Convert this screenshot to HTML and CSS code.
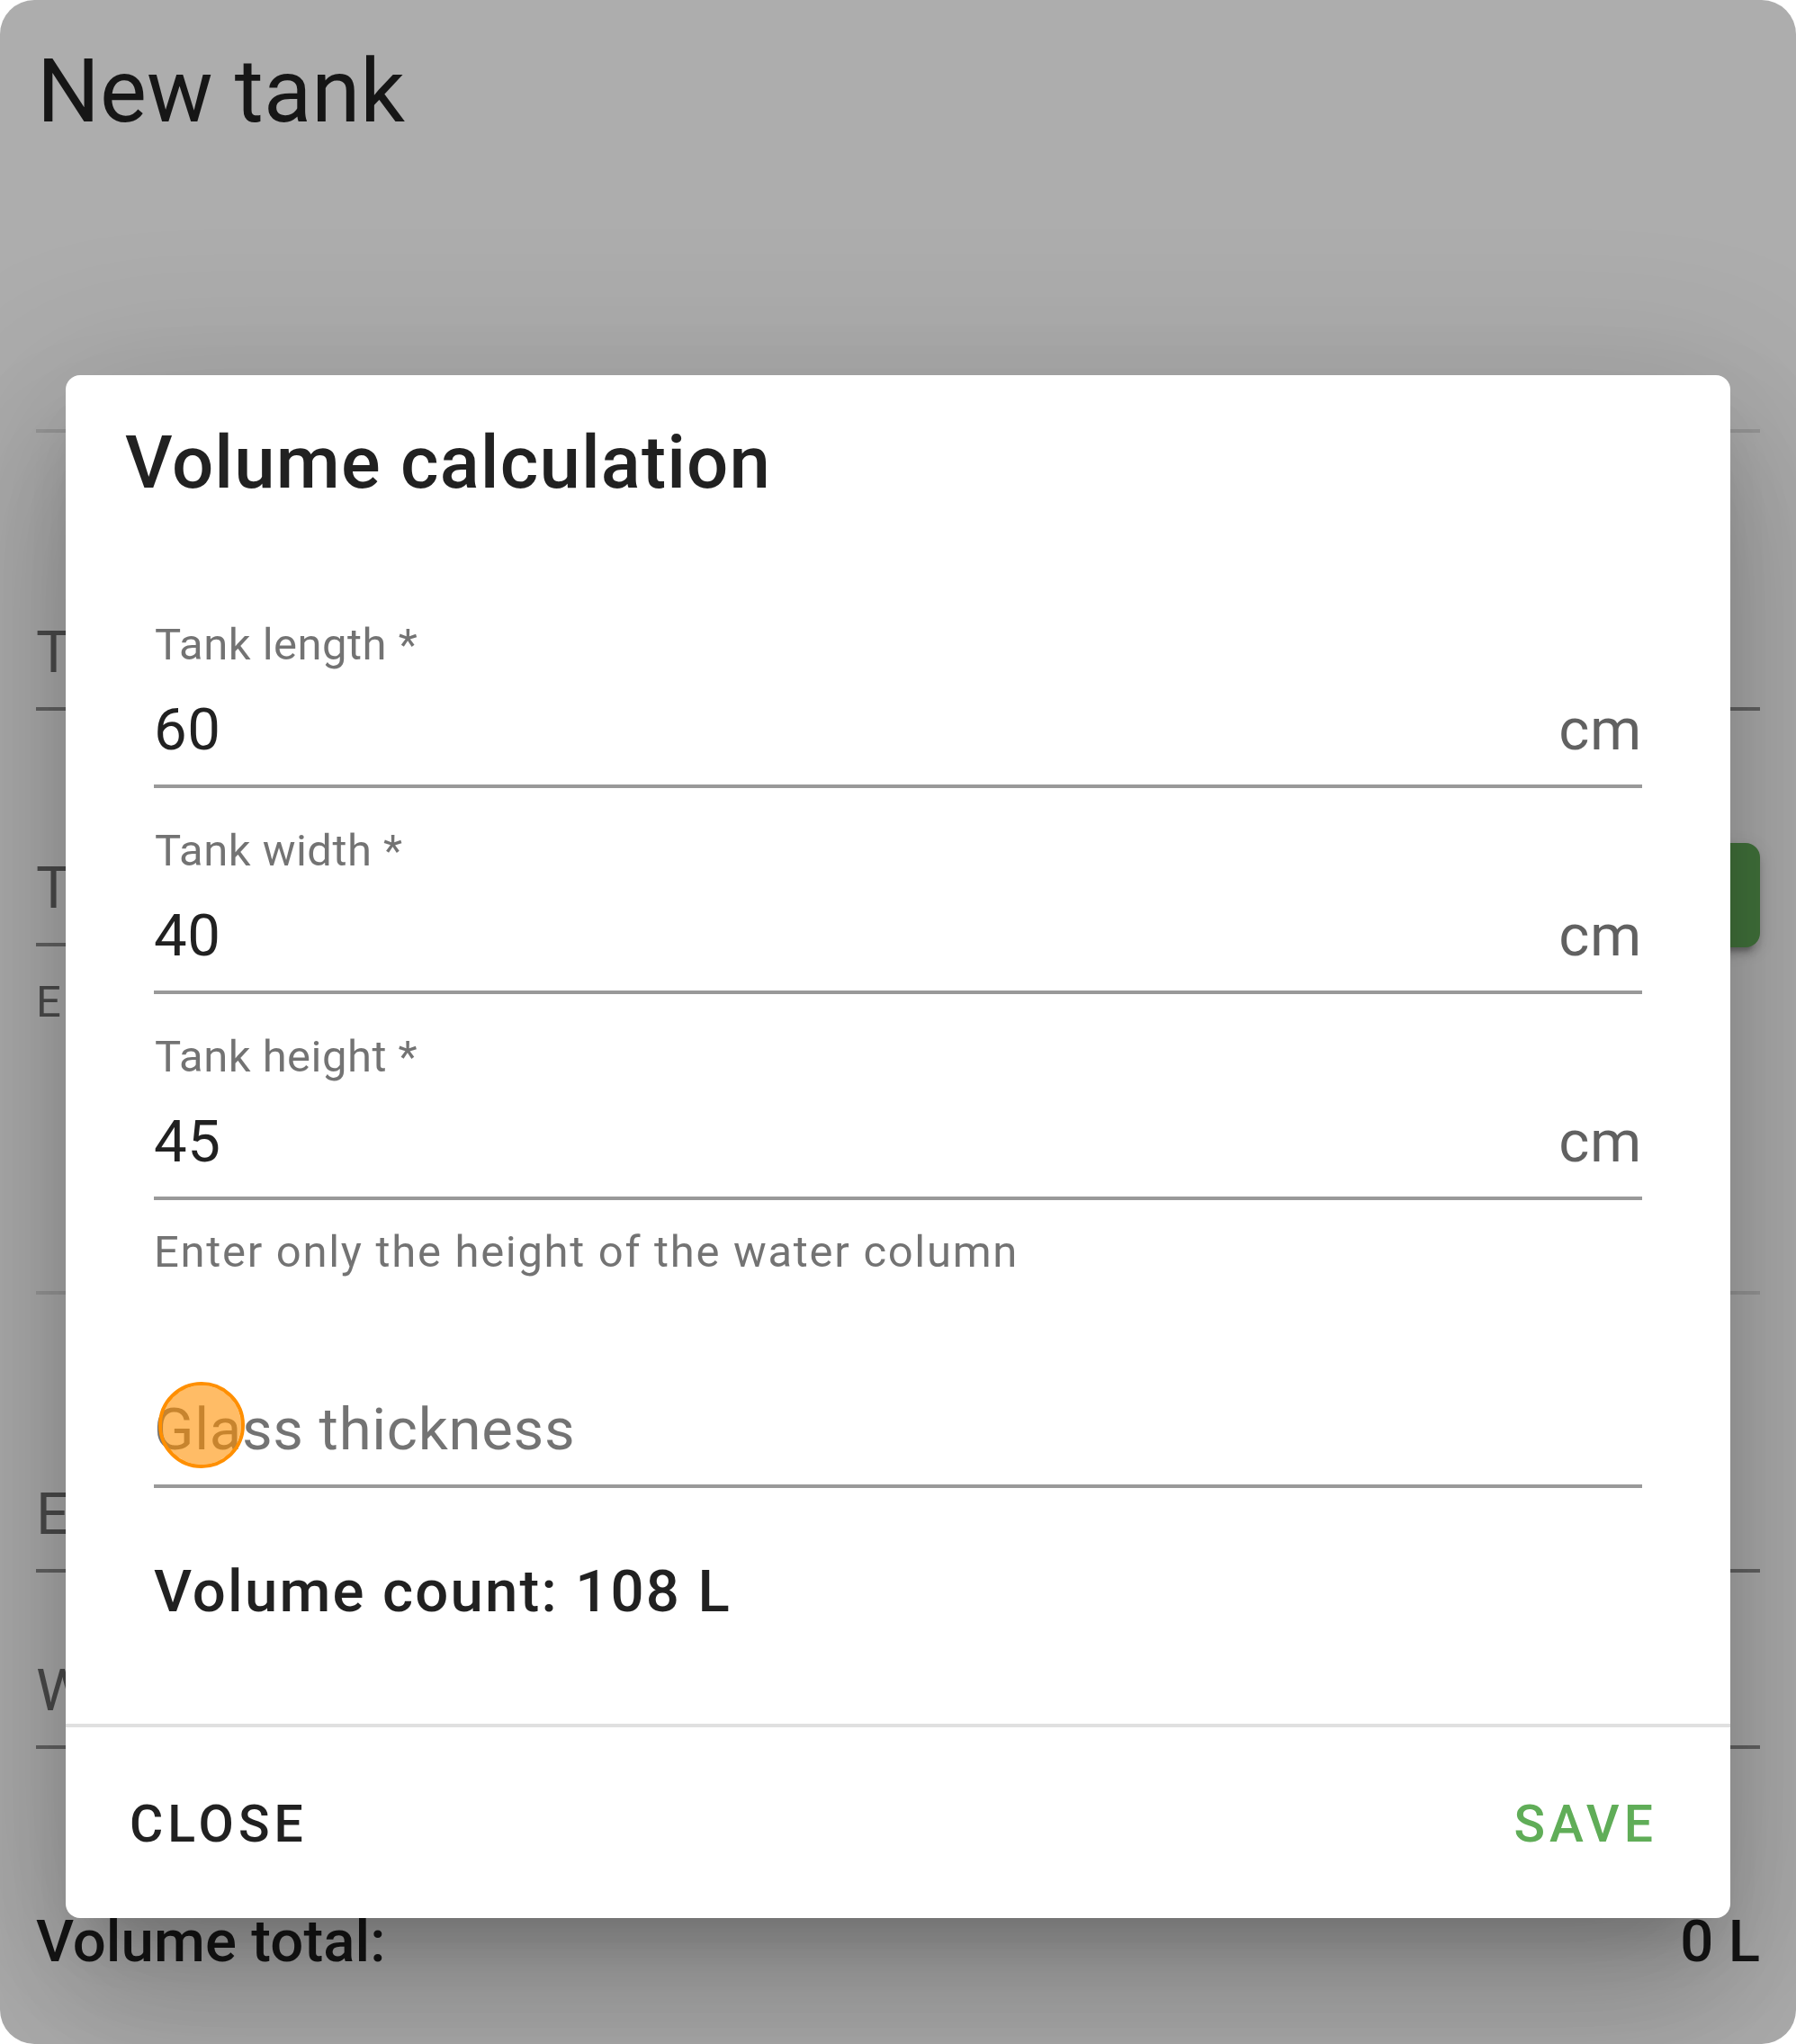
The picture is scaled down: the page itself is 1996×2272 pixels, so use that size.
FILE: index.html
```html
<!DOCTYPE html>
<html lang="en">
  <head>
    <meta charset="utf-8">
    <title>New tank</title>
    <link rel="stylesheet" href="styles.css">
  </head>
  <body>
    <div class="screen">
      <div class="page">
        <h1 class="page-title">New tank</h1>
        <hr class="divider divider-top">
        <div class="input">T</div>
        <div class="volume-row">
          <div class="input input-volume">T</div>
          <button class="calc-button"></button>
        </div>
        <div class="page-hint">E</div>
        <hr class="divider divider-middle">
        <div class="input">E</div>
        <div class="input input-last">W</div>
        <div class="total">
          <span>Volume total:</span>
          <span>0 L</span>
        </div>
      </div>

      <div class="overlay">
        <div class="dialog">
          <h2 class="dialog-title">Volume calculation</h2>
          <div class="dialog-body">
            <div class="field">
              <div class="label">Tank length *</div>
              <div class="value"><span>60</span><span class="suffix">cm</span></div>
            </div>
            <div class="field">
              <div class="label">Tank width *</div>
              <div class="value"><span>40</span><span class="suffix">cm</span></div>
            </div>
            <div class="field">
              <div class="label">Tank height *</div>
              <div class="value"><span>45</span><span class="suffix">cm</span></div>
            </div>
            <div class="hint">Enter only the height of the water column</div>
            <div class="glass">Glass thickness<span class="pointer"></span></div>
            <div class="count">Volume count: 108 L</div>
          </div>
          <div class="dialog-actions">
            <button class="button">CLOSE</button>
            <button class="button button-save">SAVE</button>
          </div>
        </div>
      </div>
    </div>
  </body>
</html>
```

FILE: styles.css
```css
* {
  box-sizing: border-box;
}
body {
  margin: 0;
  background: #fff;
  font-family: Roboto, sans-serif;
  font-size: 65.3px;
  line-height: 80px;
  color: rgba(0, 0, 0, 0.87);
}
.screen {
  position: relative;
  height: 2272px;
  border-radius: 38px;
  overflow: hidden;
}
.page {
  padding: 37px 40px 0;
}
.page-title {
  margin: 0 0 0 1px;
  font-size: 98px;
  font-weight: 400;
  line-height: 130px;
}
.divider {
  height: 4px;
  margin: 0;
  border: 0;
  background: rgba(0, 0, 0, 0.12);
}
.divider-top {
  margin: 310px 0 204px;
}
.divider-middle {
  margin: 297px 0 204px;
}
.input {
  height: 105px;
  border-bottom: 4px solid rgba(0, 0, 0, 0.42);
  color: rgba(0, 0, 0, 0.56);
}
.volume-row {
  display: flex;
  gap: 48px;
  height: 116px;
  margin-top: 147px;
}
.input-volume {
  flex: 1;
  margin-top: 10px;
}
.calc-button {
  width: 300px;
  border: 0;
  border-radius: 16px;
  background: #64ad5a;
  box-shadow: 0 12px 4px -8px rgba(0, 0, 0, 0.2), 0 8px 8px rgba(0, 0, 0, 0.14), 0 4px 20px rgba(0, 0, 0, 0.12);
}
.page-hint {
  margin-top: 36px;
  font-size: 49px;
  line-height: 49px;
  color: rgba(0, 0, 0, 0.56);
}
.input-last {
  margin-top: 91px;
}
.total {
  display: flex;
  justify-content: space-between;
  margin-top: 174px;
  font-weight: 500;
  letter-spacing: 0.001em;
}

/* dialog */
.overlay {
  position: absolute;
  inset: 0;
  padding: 417px 73px 0;
  background: rgba(0, 0, 0, 0.32);
}
.dialog {
  height: 1715px;
  border-radius: 16px;
  background: #fff;
  box-shadow: 0 45px 61px -29px rgba(0, 0, 0, 0.2), 0 98px 155px 12px rgba(0, 0, 0, 0.14), 0 37px 188px 33px rgba(0, 0, 0, 0.12);
}
.dialog-title {
  margin: 0;
  padding: 32px 66px 0;
  font-size: 81.6px;
  font-weight: 500;
  line-height: 130px;
  letter-spacing: 0.0135em;
}
.dialog-body {
  padding: 107px 98px 107px;
}
.field {
  height: 190px;
  margin-bottom: 39px;
  border-bottom: 4px solid rgba(0, 0, 0, 0.4);
}
.label {
  padding: 1px 0 0 1px;
  margin-bottom: 24px;
  font-size: 49px;
  line-height: 60px;
  letter-spacing: 0.0098em;
  color: rgba(0, 0, 0, 0.55);
}
.value {
  display: flex;
  justify-content: space-between;
  letter-spacing: 0.009375em;
}
.suffix {
  color: rgba(0, 0, 0, 0.62);
}
.hint {
  margin-top: -6px;
  font-size: 49px;
  line-height: 49px;
  letter-spacing: 0.0345em;
  color: rgba(0, 0, 0, 0.55);
}
.glass {
  position: relative;
  height: 105px;
  margin-top: 133px;
  border-bottom: 4px solid rgba(0, 0, 0, 0.4);
  letter-spacing: 0.0105em;
  color: rgba(0, 0, 0, 0.55);
}
.pointer {
  position: absolute;
  top: -13px;
  left: 5px;
  width: 96px;
  height: 96px;
  border: 4px solid #ff8f00;
  border-radius: 50%;
  background: rgba(255, 143, 0, 0.6);
  background-clip: padding-box;
}
.count {
  margin-top: 75px;
  font-weight: 500;
  letter-spacing: 0.0333em;
}
.dialog-actions {
  display: flex;
  justify-content: space-between;
  padding: 68px 81px 0 71px;
  border-top: 4px solid rgba(0, 0, 0, 0.12);
}
.button {
  padding: 0;
  border: 0;
  background: none;
  font: 500 57.1px/80px Roboto, sans-serif;
  letter-spacing: 0.0893em;
  color: rgba(0, 0, 0, 0.87);
}
.button-save {
  color: #60ad58;
}
```
